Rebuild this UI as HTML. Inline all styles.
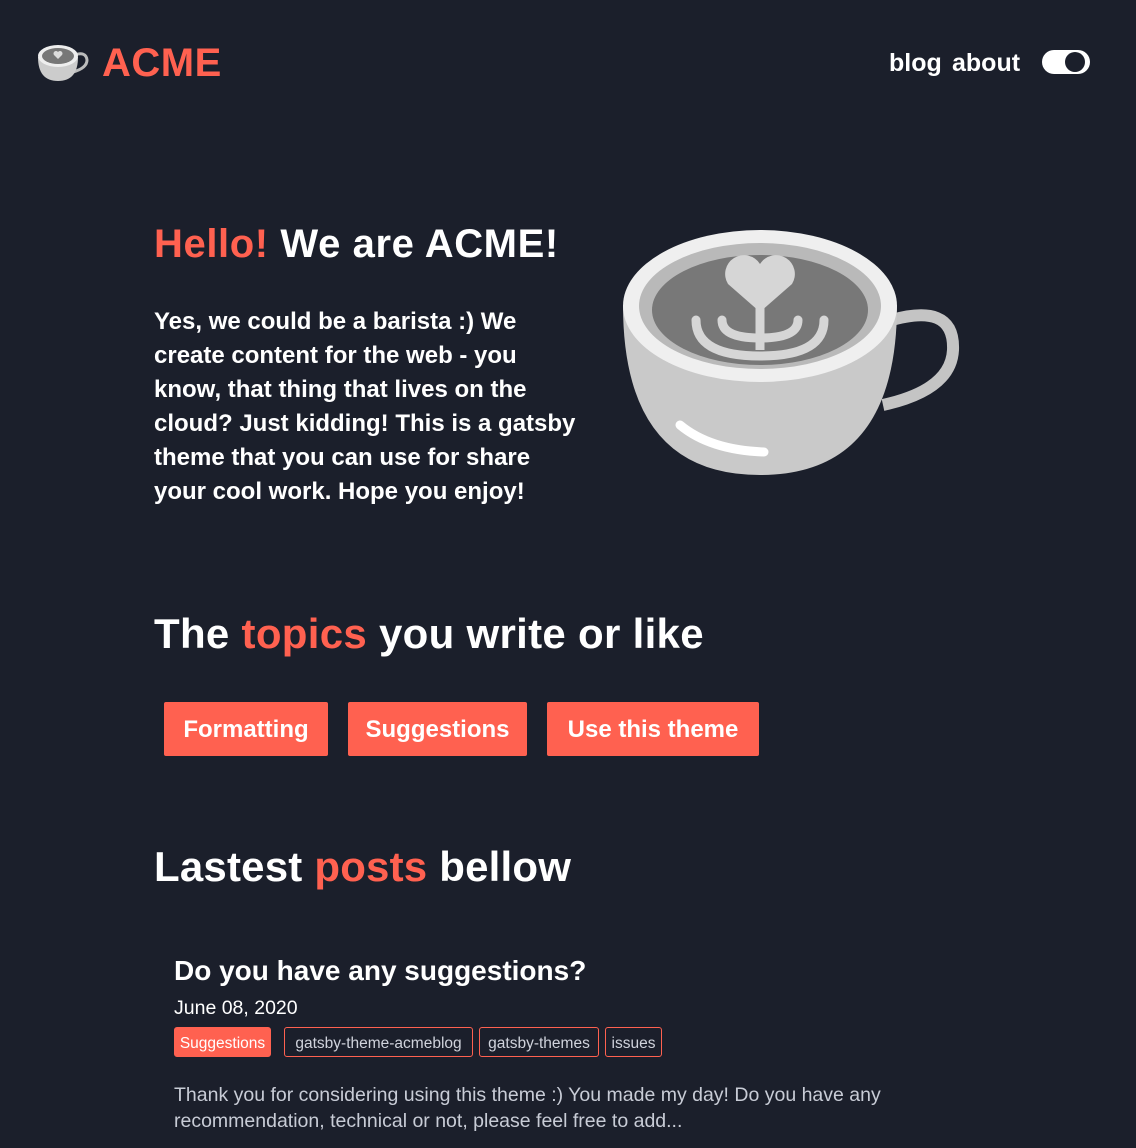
<!DOCTYPE html>
<html><head><meta charset="utf-8"><style>
body{margin:0;background:#1b1f2b;width:1136px;height:1148px;overflow:hidden;font-family:"Liberation Sans",sans-serif;color:#fff;position:relative}
.a{color:#ff6150}
.abs{position:absolute;white-space:nowrap}
.btn{position:absolute;background:#ff6150;color:#fff;font-weight:bold;font-size:24px;height:54px;line-height:56px;text-align:center;border-radius:2px}
.tag{position:absolute;top:1027px;height:30px;line-height:31px;font-size:15.5px;border:1px solid #ff6150;border-radius:3px;color:#d0d3dc;text-align:center;box-sizing:border-box}
</style></head><body>
<svg class="abs" style="left:36px;top:43px" width="54" height="40" viewBox="0 0 54 40">
<path d="M38 12 q12 -4 13 5 q0 8 -14 12" fill="none" stroke="#bbb" stroke-width="3"/>
<path d="M2 14 q0 24 20 24 q20 0 20 -24 z" fill="#ccc"/>
<ellipse cx="22" cy="13" rx="20" ry="11" fill="#eee"/>
<ellipse cx="22" cy="13" rx="16" ry="8" fill="#777"/>
<path d="M22 16 l-4 -4 a2.5 2.5 0 0 1 4 -3 a2.5 2.5 0 0 1 4 3z" fill="#ddd"/>
</svg>
<div class="abs a" style="left:102px;top:41px;font-size:40px;font-weight:bold;letter-spacing:0.5px">ACME</div>
<div class="abs" style="left:889px;top:49px;font-size:25px;font-weight:bold">blog</div>
<div class="abs" style="left:952px;top:49px;font-size:25px;font-weight:bold">about</div>
<div class="abs" style="left:1042px;top:50px;width:48px;height:24px;border-radius:12px;background:#fff"></div>
<div class="abs" style="left:1065px;top:52px;width:20px;height:20px;border-radius:10px;background:#1b1f2b"></div>

<div class="abs" style="left:154px;top:222px;font-size:40px;font-weight:bold;letter-spacing:0.6px"><span class="a">Hello!</span> We are ACME!</div>
<div class="abs" style="left:154px;top:305px;width:425px;white-space:normal;font-size:24px;font-weight:bold;line-height:34px">Yes, we could be a barista :) We create content for the web - you know, that thing that lives on the cloud? Just kidding! This is a gatsby theme that you can use for share your cool work. Hope you enjoy!</div>

<svg class="abs" style="left:620px;top:228px" width="345" height="255" viewBox="620 228 345 255">
<path d="M885 322 q70 -22 68 28 q-2 40 -70 55" fill="none" stroke="#c4c4c4" stroke-width="12"/>
<path d="M623 305 q0 170 137 170 q137 0 137 -170 z" fill="#c9c9c9"/>
<ellipse cx="760" cy="306" rx="137" ry="76" fill="#efefef"/>
<ellipse cx="760" cy="306" rx="121" ry="63" fill="#b9b9b9"/>
<ellipse cx="760" cy="310" rx="108" ry="55" fill="#787878"/>
<path d="M760 312 l-32 -28 a17 17 0 0 1 32 -20 a17 17 0 0 1 32 20z" fill="#d6d6d6"/>
<path d="M696 320 q0 36 64 36 q64 0 64 -36" fill="none" stroke="#d6d6d6" stroke-width="9" stroke-linecap="round"/>
<path d="M722 320 q0 18 38 18 q38 0 38 -18" fill="none" stroke="#d6d6d6" stroke-width="9" stroke-linecap="round"/>
<line x1="760" y1="300" x2="760" y2="350" stroke="#d6d6d6" stroke-width="9"/>
<path d="M680 425 q30 25 84 27" fill="none" stroke="#fff" stroke-width="9" stroke-linecap="round"/>
</svg>

<div class="abs" style="left:154px;top:610px;font-size:42px;font-weight:bold;letter-spacing:0.3px">The <span class="a">topics</span> you write or like</div>
<div class="btn" style="left:164px;top:702px;width:164px">Formatting</div>
<div class="btn" style="left:348px;top:702px;width:179px">Suggestions</div>
<div class="btn" style="left:547px;top:702px;width:212px">Use this theme</div>

<div class="abs" style="left:154px;top:843px;font-size:42px;font-weight:bold;letter-spacing:0.2px">Lastest <span class="a">posts</span> bellow</div>
<div class="abs" style="left:174px;top:955px;font-size:28px;font-weight:bold">Do you have any suggestions?</div>
<div class="abs" style="left:174px;top:997px;font-size:19.5px">June 08, 2020</div>
<div class="tag" style="left:174px;width:97px;background:#ff6150;color:#fff">Suggestions</div>
<div class="tag" style="left:284px;width:189px">gatsby-theme-acmeblog</div>
<div class="tag" style="left:479px;width:120px">gatsby-themes</div>
<div class="tag" style="left:605px;width:57px">issues</div>
<div class="abs" style="left:174px;top:1082px;width:760px;white-space:normal;font-size:19.5px;line-height:26px;color:#c8ccd6">Thank you for considering using this theme :) You made my day! Do you have any recommendation, technical or not, please feel free to add...</div>
</body></html>
